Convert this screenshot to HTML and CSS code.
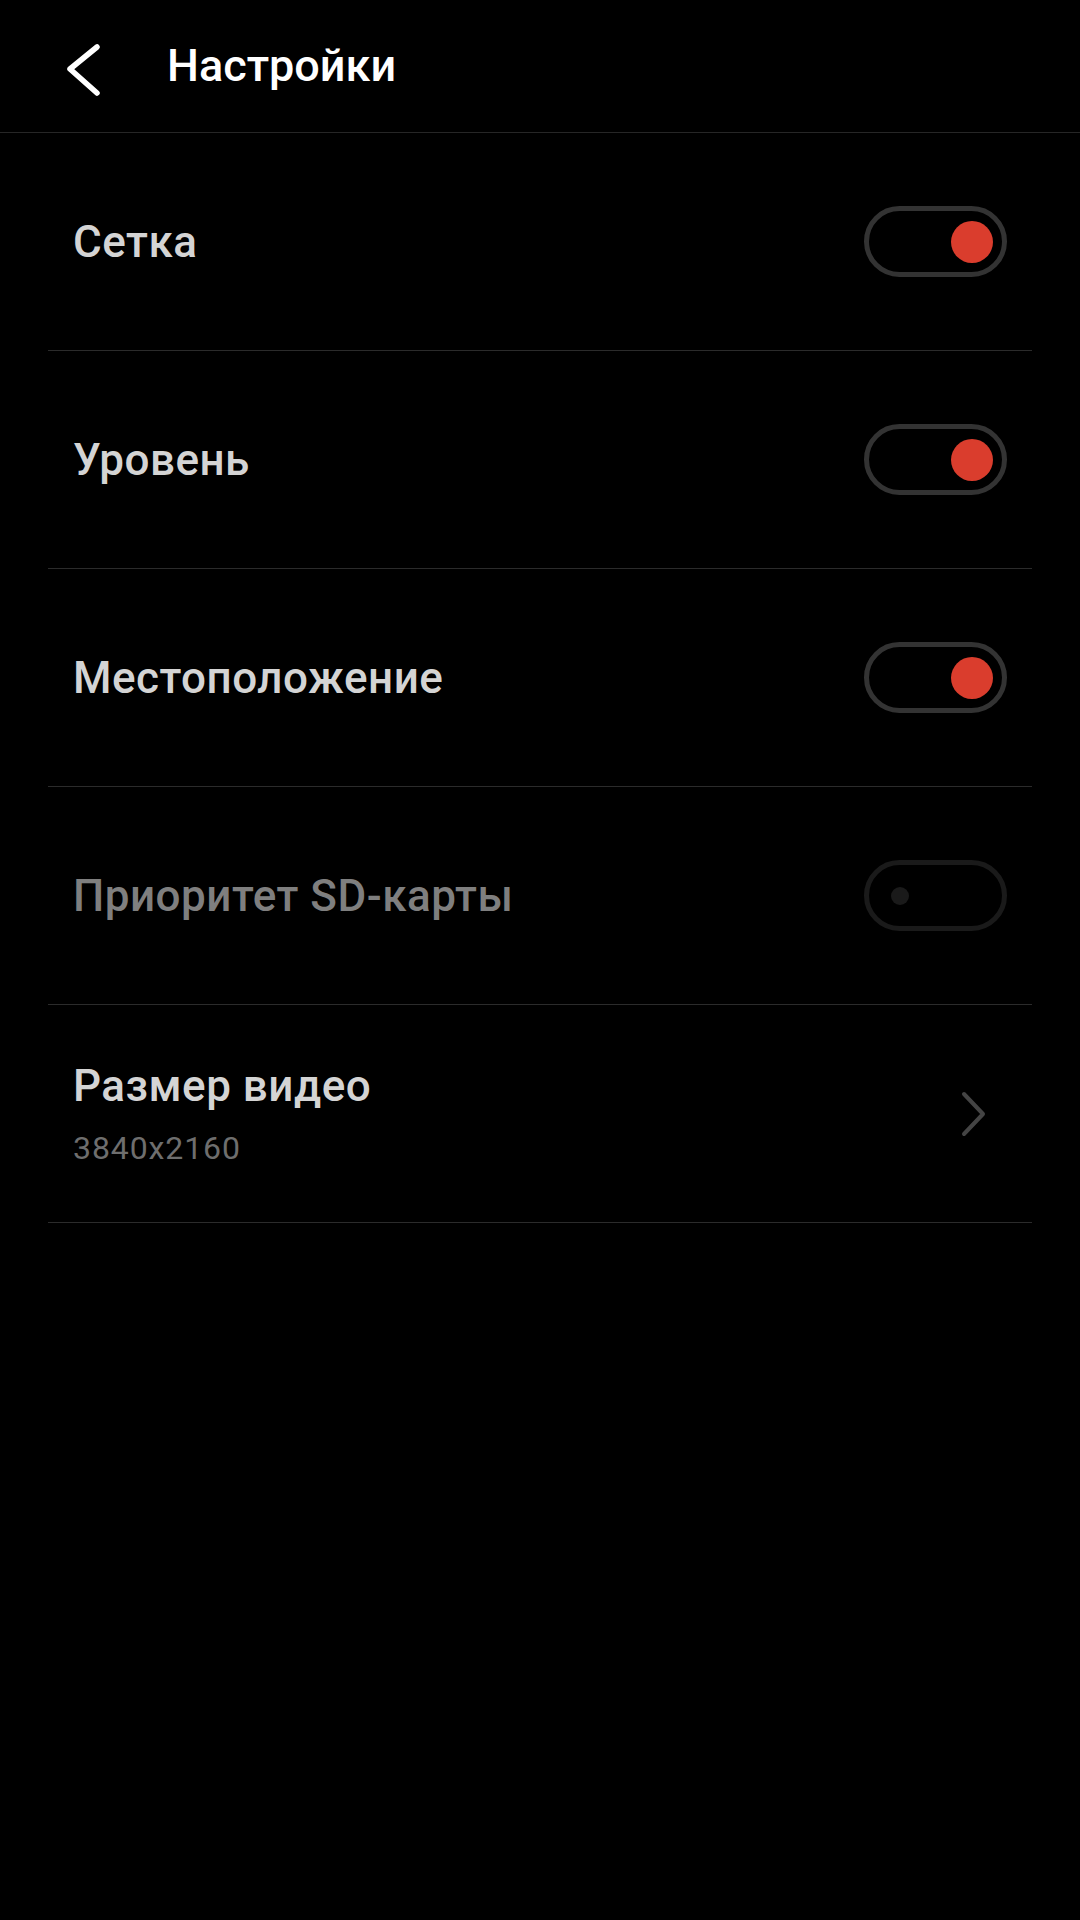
FILE: index.html
```html
<!DOCTYPE html>
<html lang="ru">

<head>
    <meta charset="UTF-8">
    <meta name="viewport" content="width=device-width, initial-scale=1.0">
    <title>Настройки</title>
    <link rel="stylesheet" href="styles.css">
</head>

<body>

    <div class="header">
        <svg class="back" width="40" height="60" viewBox="0 0 40 60">
            <path d="M35 11 L8 33 L35 57" fill="none" stroke="#fff" stroke-width="5.5" stroke-linecap="round" stroke-linejoin="round" />
        </svg>
        <h1>Настройки</h1>
    </div>

    <div class="list">
        <div class="row">
            <span class="label">Сетка</span>
            <div class="switch on"><div class="knob"></div></div>
        </div>

        <div class="row">
            <span class="label">Уровень</span>
            <div class="switch on"><div class="knob"></div></div>
        </div>

        <div class="row">
            <span class="label">Местоположение</span>
            <div class="switch on"><div class="knob"></div></div>
        </div>

        <div class="row disabled">
            <span class="label">Приоритет SD-карты</span>
            <div class="switch off"><div class="knob"></div></div>
        </div>

        <div class="row">
            <div class="texts">
                <span class="label">Размер видео</span>
                <span class="sub">3840x2160</span>
            </div>
            <svg class="chevron" width="40" height="50" viewBox="0 0 40 50">
                <path d="M4 5 L23 25 L4 45" fill="none" stroke="#444" stroke-width="4" stroke-linecap="round" stroke-linejoin="round" />
            </svg>
        </div>
    </div>

</body>

</html>
```

FILE: styles.css
```css
html {
    background-color: #000;
    font-family: Roboto, "Liberation Sans", sans-serif;
}

body {
    margin: 0;
    width: 1080px;
    min-height: 1920px;
    background-color: #000;
}

.header {
    display: flex;
    align-items: center;
    height: 132px;
    border-bottom: 1px solid #262626;
    padding-left: 62px;
    box-sizing: content-box;
}

.back {
    flex: none;
}

h1 {
    margin: 0 0 0 65px;
    color: #fff;
    font-size: 45px;
    font-weight: 500;
    line-height: 54px;
}

.list {
    margin: 0 48px;
}

.row {
    display: flex;
    align-items: center;
    justify-content: space-between;
    height: 217px;
    border-bottom: 1px solid #2b2b2b;
    padding: 0 25px;
}

.label {
    color: #d4d4d4;
    font-size: 44px;
    font-weight: 500;
    line-height: 52px;
    letter-spacing: 0.5px;
}

.disabled .label {
    color: #7f7f7f;
}

.texts {
    display: flex;
    flex-direction: column;
    gap: 18px;
}

.sub {
    color: #6e6e6e;
    font-size: 32px;
    line-height: 37px;
    letter-spacing: 0.9px;
}

.switch {
    position: relative;
    width: 133px;
    height: 61px;
    border: 5px solid #333;
    border-radius: 40px;
}

.switch .knob {
    position: absolute;
    border-radius: 50%;
}

.switch.on .knob {
    width: 42px;
    height: 42px;
    right: 9px;
    top: 9.5px;
    background-color: #da3d2d;
}

.switch.off {
    border-color: #1a1a1a;
}

.switch.off .knob {
    width: 18px;
    height: 18px;
    left: 22px;
    top: 21.5px;
    background-color: #1a1a1a;
}

.chevron {
    margin-right: 7px;
}
```
